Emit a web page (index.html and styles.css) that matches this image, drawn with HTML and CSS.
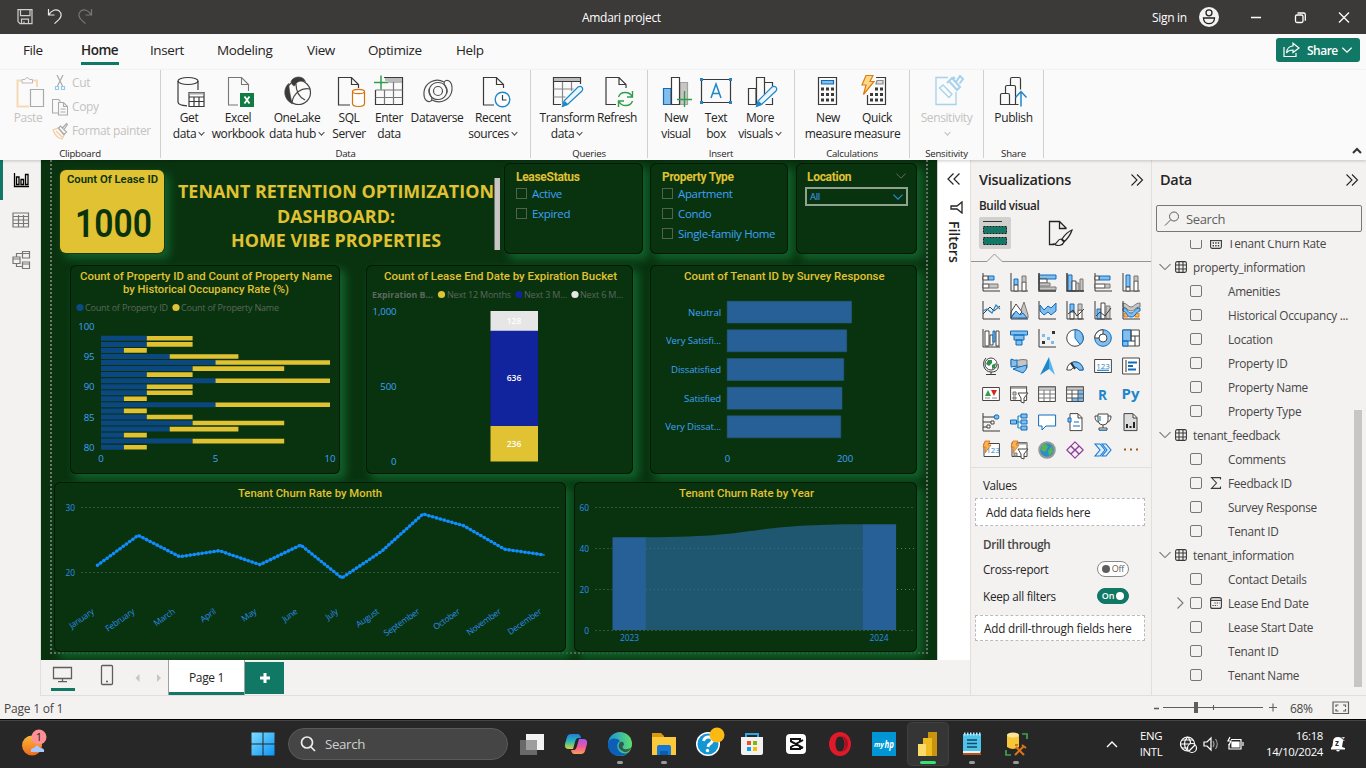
FILE: index.html
```html
<!DOCTYPE html>
<html lang="en">
<head>
<meta charset="utf-8">
<title>Amdari project</title>
<link rel="stylesheet" href="styles.css">
</head>
<body>
<svg class="defs" aria-hidden="true">
  <symbol id="table" viewBox="0 0 12 12"><rect x=".6" y=".6" width="10.8" height="10.8" rx="1.6"/><path d="M.6 4h10.8M.6 8h10.8M4 .6v10.8M8 .6v10.8"/></symbol>
  <symbol id="calc" viewBox="0 0 12 12"><rect x=".6" y=".6" width="10.8" height="10.8" rx="1.6"/><path d="M.6 3.6h10.8"/><path d="M2.6 6h7M2.6 8.8h7" stroke-dasharray="1.4 1.2" stroke-width="1.5"/></symbol>
  <symbol id="cal" viewBox="0 0 12 12"><rect x=".6" y=".6" width="10.8" height="10.8" rx="2"/><path d="M.6 3.4h10.8"/><path d="M4.5 6h5M2.5 8.5h5" stroke-dasharray="1.2 1"/></symbol>
  <symbol id="down" viewBox="0 0 12 12"><path d="M.5 3.2 6 8.6l5.500-5.400"/></symbol>
  <symbol id="right" viewBox="0 0 12 12"><path d="M3.500.5 9 6l-5.500 5.500"/></symbol>
  <symbol id="chevs" viewBox="0 0 14 12"><path d="M1.500.5 7 6l-5.500 5.500M7 .5 12.500 6 7 11.500"/></symbol>
</svg>

<header class="titlebar">
  <div class="quick">
    <svg width="90" height="20" viewBox="10 8 90 20" fill="none" stroke="#e8e8e8" stroke-width="1.2">
      <path d="M18 10.600h14v14H20l-2-2zM20.500 10.600v6h9.500v-6M21.500 24.600v-4.500h7v4.500M24 24.600v-2" stroke="#cfcfcf"/>
      <path d="M48.500 10v6h6M48.800 15.600c3-4.500 7-6 10.500-3.500 3 2.500 2 6-.5 8.500l-4.300 4"/>
      <path d="M91.500 10v6h-6M91.200 15.600c-3-4.500-7-6-10.500-3.500-3 2.500-2 6 .5 8.500l4.300 4" stroke="#777"/>
    </svg>
  </div>
  <div class="doc">Amdari project</div>
  <div class="win">
    <span>Sign in</span>
    <svg width="168" height="24" viewBox="1198 6 168 24" fill="none" stroke="#fff" stroke-width="1.300">
      <circle cx="1209" cy="18" r="10" fill="#f3f2f1" stroke="none"/>
      <circle cx="1209" cy="13.800" r="3" stroke="#222"/><path d="M1203.500 19h11c0 7.500-11 7.500-11 0z" stroke="#222"/>
      <path d="M1251 18.500h10M1339 13.500l10 10m0-10-10 10"/>
      <rect x="1295.500" y="16" width="7.500" height="7.500" rx="1.500"/><path d="M1297.500 14h6q1.800 0 1.800 1.800v6"/>
    </svg>
  </div>
</header>

<nav class="menu">
  <a class="m1">File</a><a class="m2 on">Home</a><a class="m3">Insert</a><a class="m4">Modeling</a><a class="m5">View</a><a class="m6">Optimize</a><a class="m7">Help</a>
  <button class="share"><svg width="18" height="16" viewBox="0 0 18 16" fill="none" stroke="#fff" stroke-width="1.200"><path d="M1 5v9.500h12V11M3.500 11c.5-5 3-7 6.500-7V1.200L16 6l-6 4.600V8c-3 0-5 .8-6.500 3z"/></svg><span>Share</span><svg width="10" height="10" fill="none" stroke="#fff" stroke-width="1.500"><use href="#down"/></svg></button>
</nav>

<section class="ribbon">
  <div class="group clip">
    <div class="items">
      <div class="btn off"><svg class="ic" viewBox="10 75 36 34" fill="none"><path d="M22 80.500h-4.500v26H29M37 87v-6.500h-4" stroke="#f7d9b5" stroke-width="2"/><path d="M22 83v-3.500h3q2-4 4.500 0h3V83z" stroke="#bbb" fill="#fafafa"/><path d="M30.500 89.500h13v17h-13z" stroke="#aaa" fill="#fafafa" stroke-width="1.200"/></svg><span>Paste</span></div>
      <div class="small">
        <div><svg width="16" height="18" viewBox="52 74 16 18" fill="none" stroke="#aaa" stroke-width="1.200"><path d="m57 75 5.500 11M63 75l-5.500 11"/><path d="M55.500 86.500h3v3h-3zM61.500 86.500h3v3h-3z" stroke="#9cc8e8"/></svg>Cut</div>
        <div><svg width="16" height="18" viewBox="52 97 16 18" fill="none" stroke="#aaa" stroke-width="1.100"><path d="M58 112h-5.500V98.500h6l2 2M58.500 101.500h5l4 4v8.500h-9zM63.500 101.500v4h4M60.500 108h5M60.500 111h5"/></svg>Copy</div>
        <div><svg width="16" height="18" viewBox="52 121 16 18" fill="none" stroke="#aaa" stroke-width="1.200"><path d="m53 129 5-2 6 7-2 4c-5-1-7-4-9-9zM56 130l6 6" stroke="#f2c9a0"/><path d="m58.500 127 2-2 6 6-2.500 2.500zM62.500 127l4-4.500 1 1-3.500 5"/></svg>Format painter</div>
      </div>
    </div>
    <div class="cap">Clipboard</div>
  </div>

  <div class="group data">
    <div class="items">
      <div class="btn"><svg class="ic" viewBox="171 75 36 34" fill="none" stroke="#3b3a39" stroke-width="1.200"><ellipse cx="188" cy="81" rx="10" ry="3.500"/><path d="M178 81v21c0 2.500 4 3.500 9 3.800M198 81v9"/><path d="M189 92.500h15v14h-15z" fill="#fff"/><path d="M189.500 93.500h14" stroke="#aaa" stroke-width="2"/><path d="M189 97h15M189 101.500h15M194 97v9.500M199 97v9.500"/></svg><span>Get<br>data<i class="dd"></i></span></div>
      <div class="btn"><svg class="ic" viewBox="220 75 36 34" fill="none" stroke="#797775" stroke-width="1.100"><path d="M238 105H228.500V77.500h13l7 7V91M241.500 77.500v7h7"/><path d="M240 93h14v14h-14z" fill="#107c41" stroke="none"/><path d="m244.500 96.500 5 7m0-7-5 7" stroke="#fff" stroke-width="1.800"/></svg><span>Excel<br>workbook</span></div>
      <div class="btn"><svg class="ic" viewBox="279 75 36 34" fill="none" stroke="#484644" stroke-width="1.200"><circle cx="298.500" cy="92.500" r="12"/><path d="M291 81.500c2-5.500 12-6.500 14.500 0-5-1.500-9 0-10.500 4-2 1-3-1-4-4zM288.500 83.500c-6 6-5 16 4 20.500-2-6-3-13-4-20.500z" fill="#3b3a39" stroke-width=".6"/><path d="M296 84c0 8 3 13 9 16M310 89c-8-2-17 4-18 14"/></svg><span>OneLake<br>data hub<i class="dd"></i></span></div>
      <div class="btn"><svg class="ic" viewBox="331 75 36 34" fill="none" stroke="#3b3a39" stroke-width="1.200"><path d="M350 105H338.500V77.500h13l7 7V88M351.500 77.500v7h7"/><path d="M352.500 91.500v12c0 4 12 4 12 0v-12" fill="#fff" stroke="#d8700b"/><ellipse cx="358.500" cy="91.500" rx="6" ry="2.200" fill="#fff" stroke="#d8700b"/></svg><span>SQL<br>Server</span></div>
      <div class="btn"><svg class="ic" viewBox="371 75 36 34" fill="none" stroke="#3b3a39" stroke-width="1.200"><path d="M384 77.500h18.500v27H375.500V90" /><path d="M385 79.500h17" stroke="#bbb" stroke-width="3"/><path d="M388 82h14M375.500 90h27M375.500 97.500h27M384.500 90v14.500M393.500 82v22.500" stroke="#777"/><path d="M374 82.500h14M381 75.500v14" stroke="#2f9e4b" stroke-width="1.500"/></svg><span>Enter<br>data</span></div>
      <div class="btn"><svg class="ic" viewBox="419 75 36 34" fill="none" stroke="#505050" stroke-width="1.200"><circle cx="438" cy="91" r="4.500"/><path d="M444 82c-9-5-19 1-20 10-.5 8 3 10 6 9.500 3-1 2-4 .5-6-4-6 1-13 7.500-13 7 0 10 6 8.500 11"/><path d="M432 100c9 5 19-1 20-10 .5-8-3-10-6-9.500-3 1-2 4-.5 6 4 6-1 13-7.500 13-7 0-10-6-8.500-11"/></svg><span>Dataverse</span></div>
      <div class="btn"><svg class="ic" viewBox="475 75 36 34" fill="none" stroke="#3b3a39" stroke-width="1.200"><path d="M494 105H483.500V77.500h13l7 7V88M496.500 77.500v7h7"/><circle cx="502.500" cy="99.500" r="7.300" fill="#fff" stroke="#1f86c9" stroke-width="1.400"/><path d="M502.500 95v5h4" /></svg><span>Recent<br>sources<i class="dd"></i></span></div>
    </div>
    <div class="cap">Data</div>
  </div>

  <div class="group queries">
    <div class="items">
      <div class="btn"><svg class="ic" viewBox="549 75 36 34" fill="none" stroke="#3b3a39" stroke-width="1.200"><path d="M561 104.500h-7.500v-27h27V84M553.500 81.500h27"/><path d="M554 79.500h26" stroke="#bbb" stroke-width="3"/><path d="M553.500 89h20M553.500 97h12M562.500 82v22.500M571.500 82v9" stroke="#888"/><path d="m564 101 14-14c3-2 6 1 4 4l-14 13-5.500 2.500z" fill="#eaf5fc" stroke="#1f86c9"/><path d="m563 106 2-4 2.500 2.500z" fill="#1f86c9" stroke="#1f86c9"/></svg><span>Transform<br>data<i class="dd"></i></span></div>
      <div class="btn"><svg class="ic" viewBox="599 75 36 34" fill="none" stroke="#3b3a39" stroke-width="1.200"><path d="M616 104.500h-10v-27h13l7 7V88M619 77.500v7h7"/><path d="M618.500 97c2-6 11-6 13.500-.5M632.500 91v6h-5.500M632.500 101c-2 6-11 6-13.500.5M618.500 107v-6h5.500" stroke="#2f9e4b" stroke-width="1.400"/></svg><span>Refresh</span></div>
    </div>
    <div class="cap">Queries</div>
  </div>

  <div class="group insert">
    <div class="items">
      <div class="btn"><svg class="ic" viewBox="658 75 36 34" fill="none" stroke="#3b3a39" stroke-width="1.200"><path d="M663.500 88.500h7.500v16h-7.500z" fill="#83beec" stroke="#0f6cbd"/><path d="M680 82.500h7.500v22H680z" fill="#c8c6c4" stroke="#a5a3a1"/><path d="M671.500 77.500h8v27h-8z" fill="#fff"/><path d="M677 99.500h15M684.500 91v16" stroke="#2f9e4b" stroke-width="1.400"/></svg><span>New<br>visual</span></div>
      <div class="btn"><svg class="ic" viewBox="698 75 36 34" fill="none" stroke="#3b3a39" stroke-width="1.200"><path d="M701.500 79.500h29v23h-29z"/><path d="M700 78h3v3h-3zM729 78h3v3h-3zM700 101h3v3h-3zM729 101h3v3h-3z" fill="#1f86c9" stroke="none"/><path d="m711 98 5-14 5 14m-1.500-4.500h-7" stroke="#1f86c9" stroke-width="1.500"/></svg><span>Text<br>box</span></div>
      <div class="btn"><svg class="ic" viewBox="742 75 36 34" fill="none" stroke="#3b3a39" stroke-width="1.200"><path d="M748.500 88.500h7.500v16h-7.500zM756.500 104V77.500h8V96M764.500 82.500h8V86M772.500 98v6.500h-7"/><path d="m758 101 14-14c3-2 6 1 4 4l-14 13-5.500 2.500z" fill="#eaf5fc" stroke="#1f86c9"/><path d="m757 106 2-4 2.500 2.500z" fill="#1f86c9" stroke="#1f86c9"/></svg><span>More<br>visuals<i class="dd"></i></span></div>
    </div>
    <div class="cap">Insert</div>
  </div>

  <div class="group calcs">
    <div class="items">
      <div class="btn"><svg class="ic" viewBox="810 75 36 34" fill="none" stroke="#3b3a39" stroke-width="1.200"><path d="M818.500 77.500h18v27h-18z"/><path d="M821.500 80.500h12v3.500h-12z" fill="#83beec" stroke="#0f6cbd"/><path d="M821 89h13M821 94.500h13M821 100h13" stroke-width="3" stroke-dasharray="3 2"/></svg><span>New<br>measure</span></div>
      <div class="btn"><svg class="ic" viewBox="859 75 36 34" fill="none" stroke="#3b3a39" stroke-width="1.200"><path d="M876 77.500h9.500v27h-18V95"/><path d="M877 80.500h6v3.500h-7z" fill="#ddd" stroke="#888"/><path d="M875 89h8M870 94.500h13M870 100h13" stroke-width="3" stroke-dasharray="3 2"/><path d="m866 75.500 7 0-3 6h4l-10.500 13 2.500-9.500h-4z" fill="#fbd98a" stroke="#e07b11"/></svg><span>Quick<br>measure</span></div>
    </div>
    <div class="cap">Calculations</div>
  </div>

  <div class="group sens">
    <div class="items">
      <div class="btn off"><svg class="ic" viewBox="929 75 36 34" fill="none" stroke="#a6d2ec" stroke-width="1.300"><path d="M948 77.500h-12v27h20V92"/><path d="m943 85 9 9-3 3.500-9.500-9.500zM946 88l4.500 5"/><path d="m949 81 3-3 8 9-3 3zM953 77l2 2M956 82l4-6 3 3-3.500 4.500M947 83l2-2" stroke-width="2"/></svg><span>Sensitivity<br><i class="dd"></i></span></div>
    </div>
    <div class="cap">Sensitivity</div>
  </div>

  <div class="group pub">
    <div class="items">
      <div class="btn"><svg class="ic" viewBox="997 75 36 34" fill="none" stroke="#3b3a39" stroke-width="1.200"><path d="M1002.500 104.500V95q0-1.500 1.500-1.500h6q1.500 0 1.500 1.500v9.500zM1007.500 93v-6q0-1.500 1.500-1.500h7q1.500 0 1.500 1.500v17.500h-6M1012.500 85v-6q0-1.500 1.500-1.500h7q1.500 0 1.500 1.500v10.500M1017.500 104.500h3"/><path d="M1023 106.500V92M1017.500 97.500l5.500-6 5.500 6" stroke="#1f86c9" stroke-width="1.500"/></svg><span>Publish</span></div>
    </div>
    <div class="cap">Share</div>
  </div>
  <svg class="fold" width="10" height="8" viewBox="0 0 10 8" fill="none" stroke="#333" stroke-width="2"><path d="m1 6 4-4 4 4"/></svg>
</section>

<main class="body">
  <aside class="rail">
    <div class="r on"><svg width="18" height="18" viewBox="0 0 18 18" fill="none" stroke="#000" stroke-width="1.300"><path d="M2.500 2v13.500H17M4.500 6h2.500v7.500H4.500zM9 8.500h2.500v5H9zM13.500 3.500H16v10h-2.500z"/></svg></div>
    <div class="r"><svg width="18" height="18" viewBox="0 0 18 18" fill="none" stroke="#797775" stroke-width="1.200"><path d="M1 2h15.500v14H1zM1 5.500h15.500M1 9h15.500M1 12.500h15.500M6.500 4v12M11.500 4v12"/></svg></div>
    <div class="r"><svg width="20" height="20" viewBox="0 0 20 20" fill="none" stroke="#797775" stroke-width="1.200"><path d="M2 7h7v6.500H2zM11.500 1.500h7V8h-7zM11.500 12h7v6.500h-7zM2 9h7M11.500 3.500h7M11.500 14h7M5.500 7V3.500h6M5.500 13.500v3h6"/></svg></div>
  </aside>

  <section class="center">
    <div class="canvas">
      <div class="page">
        <div class="row one">
          <div class="card kpi"><svg width="104" height="84" viewBox="60 170 104 84"><text x="67" y="183.300" textLength="91" lengthAdjust="spacingAndGlyphs" class="kt">Count Of Lease ID</text><text x="75" y="237" textLength="77" lengthAdjust="spacingAndGlyphs" class="kv">1000</text></svg></div>
          <svg class="headline" width="328" height="92" viewBox="172 163 328 92"><g class="ht"><text x="178" y="198" textLength="316" lengthAdjust="spacingAndGlyphs">TENANT RETENTION OPTIMIZATION</text><text x="277" y="223" textLength="118" lengthAdjust="spacingAndGlyphs">DASHBOARD:</text><text x="231" y="247" textLength="210" lengthAdjust="spacingAndGlyphs">HOME VIBE PROPERTIES</text></g><path d="M494.500 178h6v72h-6z" fill="#c8c6c4"/></svg>
          <div class="card slicer s1"><h4>LeaseStatus</h4><label><i></i>Active</label><label><i></i>Expired</label></div>
          <div class="card slicer s2"><h4>Property Type</h4><label><i></i>Apartment</label><label><i></i>Condo</label><label><i></i>Single-family Home</label></div>
          <div class="card slicer s3"><h4>Location<svg width="10" height="10" fill="none" stroke="#777"><use href="#down"/></svg></h4><div class="sel">All<svg width="10" height="10" fill="none" stroke="#2b88e6" stroke-width="1.400"><use href="#down"/></svg></div></div>
        </div>

        <div class="row two">
          <div class="card c1"><svg width="270" height="209" viewBox="70 265 270 209">
            <text class="ct" x="80" y="279.500" textLength="252" lengthAdjust="spacingAndGlyphs">Count of Property ID and Count of Property Name</text>
            <text class="ct" x="123" y="292.500" textLength="166" lengthAdjust="spacingAndGlyphs">by Historical Occupancy Rate (%)</text>
            <circle cx="80" cy="307.500" r="3.600" fill="#0b4a86"/><text class="lg" x="85" y="311" textLength="83">Count of Property ID</text>
            <circle cx="176" cy="307.500" r="3.600" fill="#e0c232"/><text class="lg" x="181" y="311" textLength="98">Count of Property Name</text>
            <g class="ax end"><text x="94.500" y="330">100</text><text x="94.500" y="360">95</text><text x="94.500" y="390">90</text><text x="94.500" y="421">85</text><text x="94.500" y="451">80</text></g>
            <g class="ax mid"><text x="101" y="462">0</text><text x="215.500" y="462">5</text><text x="330" y="462">10</text></g>
            <path stroke="#0b4780" stroke-width="5" d="M101 338.300H146.800M101 344.400H146.800M101 350.400H123.900M101 356.500H169.700M101 362.500H215.500M101 368.600H192.600M101 374.600H146.800M101 380.700H215.500M101 386.700H146.800M101 392.800H146.800M101 398.800H123.900M101 404.800H215.500M101 410.900H123.900M101 417H146.800M101 423H192.600M101 429.100H169.700M101 435.100H123.900M101 441.100H192.600M101 447.200H123.900"/>
            <path stroke="#e0c232" stroke-width="4.600" d="M146.800 338.300H192.600M146.800 344.400H192.600M123.900 350.400H146.800M169.700 356.500H238.400M215.500 362.500H330M192.600 368.600H284.200M146.800 374.600H192.600M215.500 380.700H330M146.800 386.700H192.600M146.800 392.800H192.600M123.900 398.800H146.800M215.500 404.800H330M123.900 410.900H146.800M146.800 417H192.600M192.600 423H284.200M169.700 429.100H238.400M123.900 435.100H146.800M192.600 441.100H284.200M123.900 447.200H146.800"/>
          </svg></div>
          <div class="card c2"><svg width="267" height="209" viewBox="366 265 267 209">
            <text class="ct" x="384" y="279.500" textLength="233" lengthAdjust="spacingAndGlyphs">Count of Lease End Date by Expiration Bucket</text>
            <text class="lg bold" x="372" y="298" textLength="61">Expiration B...</text>
            <circle cx="441.500" cy="294.500" r="3.600" fill="#e0c232"/><text class="lg" x="447" y="298" textLength="64">Next 12 Months</text>
            <circle cx="519" cy="294.500" r="3.600" fill="#12239e"/><text class="lg" x="524" y="298" textLength="43">Next 3 M...</text>
            <circle cx="575" cy="294.500" r="3.600" fill="#e6e6e6"/><text class="lg" x="580" y="298" textLength="43">Next 6 M...</text>
            <g class="ax end"><text x="396.500" y="315">1,000</text><text x="396.500" y="390">500</text><text x="396.500" y="465">0</text></g>
            <path fill="#e6e6e6" d="M490.500 311H538v20h-47.500z"/><path fill="#12239e" d="M490.500 330.800H538V426h-47.500z"/><path fill="#e0c232" d="M490.500 426H538v35.500h-47.500z"/>
            <g class="dl"><text x="514" y="324">128</text><text x="514" y="381">636</text><text x="514" y="447">236</text></g>
          </svg></div>
          <div class="card c3"><svg width="267" height="209" viewBox="650 265 267 209">
            <text class="ct" x="684" y="279.500" textLength="200.500" lengthAdjust="spacingAndGlyphs">Count of Tenant ID by Survey Response</text>
            <g class="ax end"><text x="721" y="316">Neutral</text><text x="721" y="344">Very Satisfi...</text><text x="721" y="373">Dissatisfied</text><text x="721" y="402">Satisfied</text><text x="721" y="430">Very Dissat...</text></g>
            <path fill="#275f97" stroke="#2a5a80" stroke-width=".5" d="M727.200 301.200H851.600v21.800H727.200zM727.200 329.800H846.700v22H727.200zM727.200 358.500H843.800v22H727.200zM727.200 387.200H842v22H727.200zM727.200 415.800H840.800v22H727.200z"/>
            <g class="ax mid"><text x="727.500" y="462">0</text><text x="845" y="462">200</text></g>
          </svg></div>
        </div>

        <div class="row three">
          <div class="card c4"><svg width="512" height="170" viewBox="54 482 512 170" fill="none">
            <text class="ct" x="238" y="496.500" textLength="144" lengthAdjust="spacingAndGlyphs">Tenant Churn Rate by Month</text>
            <g class="ax sm end"><text x="75" y="510.500">30</text><text x="75" y="575.500">20</text></g>
            <path d="M81.500 507.500H559M81.500 572.500H559" stroke="#5f7a60" stroke-dasharray="1 3"/>
            <path d="M97.500 565.300 138.200 535.300 179.600 556.700 219.300 550.700 260 564.700 300.700 545 341.800 578 382 551 423 514 463.600 525.700 504.700 549.300 544.700 555" stroke="#118dff" stroke-width="2" stroke-opacity=".75"/><path d="M97.500 565.300 138.200 535.300 179.600 556.700 219.300 550.700 260 564.700 300.700 545 341.800 578 382 551 423 514 463.600 525.700 504.700 549.300 544.700 555" stroke="#118dff" stroke-width="3.600" stroke-linecap="round" stroke-dasharray="0 4"/>
            <g class="mo"><text transform="translate(94.500 613) rotate(-35)">January</text><text transform="translate(135 613) rotate(-35)">February</text><text transform="translate(175.500 613) rotate(-35)">March</text><text transform="translate(216.500 613) rotate(-35)">April</text><text transform="translate(257 613) rotate(-35)">May</text><text transform="translate(298 613) rotate(-35)">June</text><text transform="translate(338.500 613) rotate(-35)">July</text><text transform="translate(379.500 613) rotate(-35)">August</text><text transform="translate(420 613) rotate(-35)">September</text><text transform="translate(460.500 613) rotate(-35)">October</text><text transform="translate(501.500 613) rotate(-35)">November</text><text transform="translate(542 613) rotate(-35)">December</text></g>
          </svg></div>
          <div class="card c5"><svg width="343" height="170" viewBox="574 482 343 170" fill="none">
            <text class="ct" x="679" y="496.500" textLength="135" lengthAdjust="spacingAndGlyphs">Tenant Churn Rate by Year</text>
            <g class="ax sm end"><text x="589" y="510.500">60</text><text x="589" y="551.500">40</text><text x="589" y="592.500">20</text><text x="589" y="633.500">0</text></g>
            <path d="M645 630V537.200C765 537.200 740 524.200 863 524.200V630z" fill="#1f5670"/>
            <path d="M612.500 630V537.200h33.300V630zM862.800 630V524.200h33.300V630z" fill="#275f97"/>
            <path d="M595.500 507.500H914M595.500 548.500H612M595.500 589.500H612M897 548.500H914M897 589.500H914M595.500 630.500H914" stroke="#5f7a60" stroke-dasharray="1 3"/><path d="M646 548.500H863M646 589.500H863" stroke="#3a6d85" stroke-dasharray="1 3"/>
            <g class="ax sm mid"><text x="629.500" y="641">2023</text><text x="879" y="641">2024</text></g>
          </svg></div>
        </div>
      </div>
    </div>
    <aside class="filters"><svg width="14" height="12" viewBox="0 0 14 12" fill="none" stroke="#252423" stroke-width="1.200"><path d="M6.500.5 1 6l5.500 5.500M12.500.5 7 6l5.500 5.500"/></svg><svg width="13" height="13" viewBox="0 0 13 13" fill="none" stroke="#252423" stroke-width="1.300"><path d="M12 1v11L7 8H1V5h6z"/></svg><span>Filters</span></aside>
    <div class="tabs">
      <svg width="127" height="35" viewBox="41 660 127 35" fill="none" stroke="#605e5c" stroke-width="1.300"><path d="M53.500 667.500h18v11h-18zM62.500 679v2.500M58 681.700h9"/><path d="M51 689.500h24" stroke="#117865" stroke-width="3"/><rect x="101.500" y="665.500" width="11" height="19" rx="1"/><path d="M106 681.500h2"/><path d="m139.500 674-4 4 4 4zM157 674l4 4-4 4z" fill="#c8c6c4" stroke="none"/></svg>
      <div class="tab">Page 1</div><div class="add"><svg width="12" height="12"><path d="M6 1v10M1 6h10" stroke="#fff" stroke-width="3"/></svg></div>
    </div>
  </section>

  <aside class="viz">
    <h3>Visualizations<svg width="14" height="14" fill="none" stroke="#252423" stroke-width="1.100"><use href="#chevs"/></svg></h3>
    <h5>Build visual</h5>
    <svg class="modes" width="180" height="50" viewBox="971 214 180 50" fill="none">
      <rect x="979" y="217" width="32" height="32" rx="2" fill="#d2d0ce"/><path d="M983 221.500h19" stroke="#333"/><path d="M983.500 226.500h23v7h-23zM983.500 237.500h23v7h-23z" fill="#117865" stroke="#1a1a1a" stroke-dasharray="2 1"/>
      <path d="M1054 244.500h-4.500v-23h10l7 7M1059.500 221.500v7h7" stroke="#252423" stroke-width="1.300"/><path d="M1072 230c-5 2-8 6-10 9l2.500 2.500c3-3 6-6 7.500-11.500zM1061 239c-4 0-3 5-7 5 4 3 9 1 10-2z" stroke="#252423" stroke-width="1.200"/>
      <path d="M971 261.500h16l7.500-7.500 7.500 7.500h149" stroke="#979593"/>
    </svg>
    <div class="vgrid">
      <svg viewBox="0 0 18 18"><path class="k" d="M1 0v18h17"/><path class="b" d="M6 3h6v4H6z"/><path class="w" d="M1 3h5v4H1zM1 11h6v4H1z"/><path class="g" d="M7 11h9v4H7z"/></svg>
      <svg viewBox="0 0 18 18"><path class="k" d="M1 0v18h17"/><path class="b" d="M4 6h4v6H4z"/><path class="w" d="M4 12h4v6H4zM12 9h4v9h-4z"/><path class="g" d="M12 3h4v6h-4z"/></svg>
      <svg viewBox="0 0 18 18"><path class="b" d="M1 2h17v4H1z"/><path class="w" d="M1 6h8v4H1z"/><path class="g" d="M1 10h11v3H1zM1 14h17v3H1z"/><path class="k" stroke-width="1.500" d="M1 0v18h17"/></svg>
      <svg viewBox="0 0 18 18"><path class="b" d="M2 2h4v16H2z"/><path class="w" d="M6 8h4v10H6z"/><path class="g" d="M10 10h3v8h-3zM14 6h3v12h-3z"/><path class="k" stroke-width="1.500" d="M1 0v18h17"/></svg>
      <svg viewBox="0 0 18 18"><path class="k" d="M1 0v18h17"/><path class="b" d="M5 3h11v4H5z"/><path class="w" d="M1 3h4v4H1zM1 11h10v4H1z"/><path class="g" d="M11 11h5v4h-5z"/></svg>
      <svg viewBox="0 0 18 18"><path class="k" d="M1 0v18h17"/><path class="b" d="M4 2h4v12H4z"/><path class="w" d="M4 14h4v4H4zM12 8h4v10h-4z"/><path class="g" d="M12 3h4v5h-4z"/></svg>

      <svg viewBox="0 0 18 18"><path class="k" d="M1 0v18h17M1 13l7-7 4 4 6-5"/><path class="bl" d="m1 10 4-2 5 4 4-8 4 4"/></svg>
      <svg viewBox="0 0 18 18"><path class="g" d="m14 1 4 13v3H8z"/><path class="w" d="m6 3 6 8-3 3-5-2-3 5V11z"/><path class="b" d="m1 17 5-7 4 4 3-2 4 5z"/><path class="k" d="M1 0v18h17"/></svg>
      <svg viewBox="0 0 18 18"><path class="b" d="m2 4 4 5 4-4 3 2 5-5v8l-5 4-3-3-4 3-4-4z"/><path class="k" d="M1 0v18h17"/></svg>
      <svg viewBox="0 0 18 18"><path class="b" d="M4 3h4v8H4z"/><path class="w" d="M4 11h4v7H4zM12 9h4v9h-4z"/><path class="g" d="M12 3h4v6h-4z"/><path class="k" d="M1 0v18h17M2 13l5-4 4 6 7-7"/></svg>
      <svg viewBox="0 0 18 18"><path class="b" d="M3 8h4v10H3z"/><path class="w" d="M7 2h4v16H7z"/><path class="g" d="M12 5h4v13h-4z"/><path class="k" d="M1 0v18h17M2 15l4-4 5 4 6-8"/></svg>
      <svg viewBox="0 0 18 18"><path class="o" d="M2 12h4v4H2zM13 12h4v4h-4z"/><path class="g" d="M1 2c4 0 5 4 8 4s4-4 9-4v4c-5 0-5 4-9 4S5 6 1 6z"/><path class="b" d="M1 7c5 0 4 5 8 5s3-5 9-5v3c-4 0-4 6-9 6S6 11 1 10z"/><path class="k" d="M1 0v18h17"/></svg>

      <svg viewBox="0 0 18 18"><path class="w" d="M3 2h4v15H3zM8 6h3v10H8z"/><path class="b" d="M11 2h2v11h-2z"/><path class="w" d="M14 2h3v15h-3z"/><path class="k" d="M1 0v18h17"/></svg>
      <svg viewBox="0 0 18 18"><path class="b" d="M.5 2h17v4H.5zM4 6h10v5H4zM6 11h6v5H6z"/></svg>
      <svg viewBox="0 0 18 18"><path class="k" d="M1 0v18h17"/><path fill="#333" d="M4 12h3v3H4zM14 2h3v3h-3z"/><path fill="#7bbcf0" d="M4 5h3v3H4zM9 8h3v3H9zM13 12h3v3h-3z"/></svg>
      <svg viewBox="0 0 18 18"><circle class="w" cx="9" cy="9" r="8.300"/><path class="b" d="M9 .7V9l5 6.500A8.300 8.300 0 0 0 9 .7z"/></svg>
      <svg viewBox="0 0 18 18"><circle class="b" cx="9" cy="9" r="8.300"/><path class="w" d="M9 .7A8.300 8.300 0 0 0 .7 9H5q0-4 4-4z"/><circle class="w" cx="9" cy="9" r="4"/></svg>
      <svg viewBox="0 0 18 18"><path class="w" d="M.7 1h16.600v16H.7z"/><path class="b" d="M.7 1H9v11H.7zM.7 12H6v5H.7z"/><path class="k" d="M9 1v11M9 7h8M13 7v10M9 12h4"/></svg>

      <svg viewBox="0 0 18 18"><circle cx="9" cy="7" r="6" fill="#fff" stroke="#444"/><path fill="#2f8f4a" d="M6 3h4v3L7 9 4 7zM10 8l4-2-1 5-3 1z"/><path class="k" d="M4 1C-1 6 2 15 9 15s8-4 7-8M9 15v2.500M4 17.500h10"/></svg>
      <svg viewBox="0 0 18 18"><path class="g" d="M1 3q4 1 8 0t8 0v8l-5 1-3-3-4 1-4-2z"/><path class="b" d="M1 2q4 2 6 1v6l-6 1zM9 10l8-2q0 5-4 8l-5-2-5-2z"/></svg>
      <svg viewBox="0 0 18 18"><path fill="#1f86c9" d="M11 0 2 18l9-6z"/><path fill="#56b4ee" d="m11 0 6 18-6-6z"/></svg>
      <svg viewBox="0 0 18 18"><path class="w" d="M.8 13a8.200 8.200 0 0 1 16.400 0H13q-4-6-8 0z"/><path class="b" d="M6 5.500A8.200 8.200 0 0 1 17.200 13H13q-1-3-5-3z"/><path stroke="#333" stroke-width="2" d="m5 6 4 6"/></svg>
      <svg viewBox="0 0 18 18"><path class="w" d="M.6 2.500h16.800v13H.6z"/><text x="9" y="11.500" class="n">123</text><path class="bl" d="M3 13.300h12" stroke-width=".8"/></svg>
      <svg viewBox="0 0 18 18"><path class="w" d="M.6 1h16.800v16H.6z"/><path stroke="#333" d="M4 3v12"/><path stroke="#0f6cbd" stroke-width="2" d="M6 5.500h9M6 9h5M6 12.500h8"/></svg>

      <svg viewBox="0 0 18 18"><path class="w" d="M.6 2.500h16.800v13H.6z"/><path fill="#2f9e4b" d="m6 5 3 6H3z"/><path fill="#d22" d="M12 11 9 5h6z"/><path stroke="#888" d="M3 13h5M10 13h5"/></svg>
      <svg viewBox="0 0 18 18"><path class="w" d="M.6 1.500h16v14h-16z"/><path stroke="#999" stroke-width="2.500" d="M1 2.500h15"/><path class="g" d="M3 7h3v3H3zM3 12h3v2H3z"/><path class="w" d="M8 8h10l-4 5v5l-3-1v-4z"/></svg>
      <svg viewBox="0 0 18 18"><path class="w" d="M.6 1.500h16.800v15H.6z"/><path stroke="#999" stroke-width="2" d="M1 2.500h16"/><path stroke="#777" d="M1 5h16M1 9h16M1 13h16M6 5v11M12 5v11"/></svg>
      <svg viewBox="0 0 18 18"><path class="w" d="M.6 1.500h16.800v15H.6z"/><path fill="#7bbcf0" d="M12 5h5v11h-5zM6 13h7v3H6z"/><path stroke="#999" stroke-width="2" d="M1 2.500h16"/><path stroke="#555" d="M1 5h16M1 9h16M1 13h16M6 5v11M12 5v11"/></svg>
      <svg viewBox="0 0 18 18"><text x="8.500" y="15" class="rr" textLength="9" lengthAdjust="spacingAndGlyphs">R</text></svg>
      <svg viewBox="0 0 18 18"><text x="8.500" y="14" class="rr">Py</text></svg>

      <svg viewBox="0 0 18 18"><path class="k" d="M1 0v18h17"/><path stroke="#333" d="M1 4h12M1 9h9M1 14h6"/><path class="b" d="M13 2h3l1 2-1 2h-3l-1-2z"/><path class="w" d="M9 8h3v3H9zM5 12h3v3H5z"/></svg>
      <svg viewBox="0 0 18 18"><path class="bl" d="M5 9h6M8 3v12M8 3h3M8 15h3"/><path class="b" d="M.5 7h6v4h-6zM11 1h6v4h-6zM11 7h6v4h-6zM11 13h6v4h-6z"/></svg>
      <svg viewBox="0 0 18 18"><path fill="#fff" stroke="#0f6cbd" d="M.6 2h17v11H8l-4 4v-4H.6z"/></svg>
      <svg viewBox="0 0 18 18"><path class="w" d="M4 5V.6h8l4 4v13H4V9"/><path class="k" d="M12 1v4h4"/><path class="b" d="M2 5h3v4H2z"/><path stroke="#0f6cbd" d="M8 9h5M7 13h7"/></svg>
      <svg viewBox="0 0 18 18"><path class="w" d="M4 1h10v7q-1 4-5 4T4 8zM4 3H1q0 6 4 6M14 3h3q0 6-4 6M9 12v3M5 17h8v-2H5z"/><path class="bl" d="M6 3v5M5 17.500h8"/></svg>
      <svg viewBox="0 0 18 18"><path fill="#ddd" stroke="#444" d="M2 .6h9l4 4v13H2zM11 1v4h4"/><path stroke="#222" stroke-width="2" d="M5 15v-4M8.500 15v-2M12 15V9"/></svg>

      <svg viewBox="0 0 18 18"><path class="w" d="M2 2.500h15.400v13H2z"/><text x="11" y="12" class="n">123</text><path class="o" d="M3 0h5L6 4h3l-6 8 1-6H1z"/></svg>
      <svg viewBox="0 0 18 18"><path class="w" d="M2 1.500h15v14H2z"/><path stroke="#999" stroke-width="2" d="M6 2.500h11"/><path class="g" d="M4 12h3v3H4z"/><path class="w" d="M8 8h10l-4 5v5l-3-1v-4z"/><path class="o" d="M3 0h5L6 4h3l-6 8 1-6H1z"/></svg>
      <svg viewBox="0 0 18 18"><circle cx="9" cy="9" r="7.800" fill="#2b8fc4" stroke="#999" stroke-width="2"/><path fill="#5ab25a" d="M4 4l4-1 2 3-3 5-4-2zM10 10l4-5 1 6-4 4z"/></svg>
      <svg viewBox="0 0 18 18"><path d="m9 .8 4 4-4 4-4-4zM4.800 5l4 4-4 4-4-4zM13.200 5l4 4-4 4-4-4zM9 9.200l4 4-4 4-4-4z" stroke="#8e3a9d" stroke-width="1.100" stroke-linejoin="round"/></svg>
      <svg viewBox="0 0 18 18"><path d="M1 3h5l5 6-5 6H1l5-6zM8 3h4l5 6-5 6H8l5-6z" fill="#dceefb" stroke="#1479d6" stroke-width="1.100"/></svg>
      <svg viewBox="0 0 18 18"><path fill="#9b5a1c" d="M2 7.500h2v2H2zM8 7.500h2v2H8zM14 7.500h2v2h-2z"/></svg>
    </div>
    <div class="wells">
      <p class="lab">Values</p>
      <div class="drop">Add data fields here</div>
      <p class="lab dt">Drill through</p>
      <div class="tg"><span>Cross-report</span><b class="sw"><i></i>Off</b></div>
      <div class="tg t2"><span>Keep all filters</span><b class="sw on">On<i></i></b></div>
      <div class="drop d2">Add drill-through fields here</div>
    </div>
  </aside>

  <aside class="fields">
    <h3>Data<svg width="14" height="14" fill="none" stroke="#252423" stroke-width="1.100"><use href="#chevs"/></svg></h3>
    <div class="find"><svg width="16" height="16" viewBox="0 0 16 16" fill="none" stroke="#605e5c"><circle cx="10" cy="5.500" r="4.500"/><path d="M6.800 8.700 1 14.500"/></svg>Search</div>
    <div class="list">
      <ul>
        <li class="cut"><i></i><svg class="ti"><use href="#calc"/></svg><span>Tenant Churn Rate</span></li>
        <li class="t"><svg class="ch"><use href="#down"/></svg><svg class="ti"><use href="#table"/></svg>property_information</li>
        <li><i></i><span>Amenities</span></li>
        <li><i></i><span>Historical Occupancy ...</span></li>
        <li><i></i><span>Location</span></li>
        <li><i></i><span>Property ID</span></li>
        <li><i></i><span>Property Name</span></li>
        <li><i></i><span>Property Type</span></li>
        <li class="t"><svg class="ch"><use href="#down"/></svg><svg class="ti"><use href="#table"/></svg>tenant_feedback</li>
        <li><i></i><span>Comments</span></li>
        <li><i></i><svg class="ti" viewBox="0 0 12 12"><path d="M10.500 2.500V.6H1.500L6.500 6l-5 5.400h9V9.500"/></svg><span>Feedback ID</span></li>
        <li><i></i><span>Survey Response</span></li>
        <li><i></i><span>Tenant ID</span></li>
        <li class="t"><svg class="ch"><use href="#down"/></svg><svg class="ti"><use href="#table"/></svg>tenant_information</li>
        <li><i></i><span>Contact Details</span></li>
        <li><svg class="ch ex"><use href="#right"/></svg><i></i><svg class="ti"><use href="#cal"/></svg><span>Lease End Date</span></li>
        <li><i></i><span>Lease Start Date</span></li>
        <li><i></i><span>Tenant ID</span></li>
        <li><i></i><span>Tenant Name</span></li>
      </ul>
      <div class="bar"></div>
    </div>
  </aside>
</main>

<footer class="status"><span>Page 1 of 1</span>
  <svg width="130" height="20" viewBox="1150 698 130 20" fill="none" stroke="#605e5c" stroke-width="1.300"><path d="M1154 708.500h5" stroke-width="1.600"/><path d="M1163 707.500h100M1213.500 705v5M1269 707.500h8M1273 703.500v8" stroke-width="1.100"/><path d="M1196 702v11" stroke-width="4"/></svg>
  <span class="pc">68%</span>
  <svg width="18" height="14" viewBox="0 0 18 14" fill="none" stroke="#605e5c" stroke-width="1.200"><path d="M1 1h15.500v11.500H1z"/><path d="M4 6V4h2.500M11 4h2.500v2M13.500 8v2H11M6.500 10H4V8"/></svg>
</footer>

<footer class="taskbar">
  <div class="wid"><svg width="30" height="32" viewBox="20 726 30 32"><defs><linearGradient id="sun" x2="0" y2="1"><stop stop-color="#f6b93b"/><stop offset="1" stop-color="#f26a1b"/></linearGradient></defs><circle cx="32" cy="743.500" r="10" fill="url(#sun)"/><path d="M31 750q-1-4 3-4 3-5 6 0 5 0 4 4z" fill="#a9c8ff"/><ellipse cx="39" cy="735" rx="7.500" ry="7.500" fill="#ff8f93"/><text x="39" y="739" text-anchor="middle" font-size="11" fill="#222">1</text></svg></div>
  <svg class="start" width="24" height="24" viewBox="0 0 24 24"><defs><linearGradient id="wn" x2="1" y2="1"><stop stop-color="#7fdcff"/><stop offset="1" stop-color="#0a95f4"/></linearGradient></defs><path fill="url(#wn)" d="M.5.5h11v11H.5zM12.500.5h11v11h-11zM.5 12.500h11v11H.5zM12.500 12.500h11v11h-11z"/></svg>
  <div class="srch"><svg width="16" height="16" viewBox="0 0 16 16" fill="none" stroke="#eee" stroke-width="1.700"><circle cx="7" cy="6.500" r="5.500"/><path d="m11 11 4 4"/></svg>Search</div>
  <div class="apps">
    <div><svg viewBox="0 0 24 24"><path fill="#f2f2f2" d="M6 2h18v16H6z"/><path fill="#808080" fill-opacity=".75" d="M0 8h17v15H0z"/></svg></div>
    <div><svg viewBox="0 0 24 24"><defs><linearGradient id="cA" x2="0" y2="1"><stop stop-color="#1f7be0"/><stop offset=".5" stop-color="#2cb9b4"/><stop offset="1" stop-color="#d8d43a"/></linearGradient><linearGradient id="cB" x2="0" y2="1"><stop stop-color="#a05bf0"/><stop offset=".5" stop-color="#f0569c"/><stop offset="1" stop-color="#ff9a55"/></linearGradient></defs><path fill="url(#cA)" d="M7 2h7q2 0 3 4h-3q-2 0-3 4l-2 7H5q-5 0-4-5l2-7q1-3 4-3z"/><path fill="url(#cB)" d="M17 22h-7q-2 0-3-4h3q2 0 3-4l2-7h4q5 0 4 5l-2 7q-1 3-4 3z"/></svg></div>
    <div class="run"><svg viewBox="0 0 24 24"><defs><linearGradient id="ed" x2="1"><stop stop-color="#1a8fe0"/><stop offset="1" stop-color="#5ee06a"/></linearGradient></defs><circle cx="12" cy="12" r="12" fill="url(#ed)"/><path fill="#0d5fb5" d="M0 12C1 6 8 5 12 9c-4 2-4 9 2 12 3 1 6 0 8-2-5 7-22 8-22-7z"/><path fill="#272727" d="M12 10q4-1 4 3-3 2 0 4 4 1 8-2-3 6-8 5-8-4-4-10z" opacity=".65"/></svg></div>
    <div class="run"><svg viewBox="0 0 24 24"><path fill="#d99a12" d="M0 1h9l3 3v6H0z"/><path fill="#fbc93a" d="M0 5h24v18H0z"/><path fill="#1478d4" d="M5 15q0-2 2-2h10q2 0 2 2v8H5z"/><path fill="#0b5cad" d="M8 19h8v4H8z"/></svg></div>
    <div><svg viewBox="0 0 24 24" overflow="visible"><circle cx="12" cy="12" r="12" fill="#fff"/><circle cx="12" cy="12" r="10.500" fill="#1296d4"/><path d="M7.500 9q1-4 5-4t4 4q-1 2-4 4l-.5 2" fill="none" stroke="#fff" stroke-width="2.800"/><circle cx="11.500" cy="18.500" r="1.700" fill="#fff"/><circle cx="21" cy="3" r="7.500" fill="#fdb913"/></svg></div>
    <div><svg viewBox="0 0 24 24"><path d="M6 6V2h12v4" stroke="#2ea8e5" stroke-width="2" fill="none"/><path fill="#f1f1f1" d="M1 5h22v16q0 2-2 2H3q-2 0-2-2z"/><path fill="#f25022" d="M7 9h4v4H7z"/><path fill="#7fba00" d="M13 9h4v4h-4z"/><path fill="#00a4ef" d="M7 15h4v4H7z"/><path fill="#ffb900" d="M13 15h4v4h-4z"/></svg></div>
    <div><svg viewBox="0 0 24 24"><rect x="2" y="2" width="20" height="20" rx="4" fill="#fff"/><path d="M19 16 7 9.500V7h9v2.500L7 15v2h9v-2.500M19 8l-3 1.700" fill="none" stroke="#111" stroke-width="2"/></svg></div>
    <div><svg viewBox="0 0 24 24"><path fill="#e0192b" fill-rule="evenodd" d="M12 0a11 12 0 1 0 0 24a11 12 0 0 0 0-24zM12 4.500c3 0 4.500 3.500 4.500 7.500s-1.500 7.500-4.500 7.500S7.500 16 7.500 12 9 4.500 12 4.500z"/><path fill="#a81020" d="M14 20c4-3 4-13 0-16 7 1 9 13 0 16z"/></svg></div>
    <div><svg viewBox="0 0 24 24"><path fill="#0096d6" d="M0 0h24v24H0z"/><text x="2" y="15" fill="#fff" font-size="7.500" font-weight="700" font-style="italic" textLength="10" lengthAdjust="spacingAndGlyphs">my</text><text x="12.500" y="16" fill="#fff" font-size="10.500" font-weight="700" font-style="italic" textLength="9.500" lengthAdjust="spacingAndGlyphs">hp</text></svg></div>
    <div class="act"><svg viewBox="0 0 24 24"><path fill="#c8930d" d="M12 0h9v24h-9z"/><path fill="#efbc1f" d="M7 6h9v18H7z"/><path fill="#fbdc6a" d="M2 12h8v12H2z"/></svg></div>
    <div class="run"><svg viewBox="0 0 24 24"><path fill="#4fc3e8" d="M3 2h18v18H3z"/><path fill="#b5541c" d="M3 20h18v3H3z"/><path fill="#eee" d="M3 19h17v2H3z"/><path stroke="#0c4b6e" stroke-width="1.600" d="M7 8h10M7 11.500h10M7 15h10"/><path stroke="#bdeafc" stroke-width="3" stroke-dasharray="1.500 1.500" d="M4 2h17"/></svg></div>
    <div class="run"><svg viewBox="0 0 24 24" fill="none"><path d="M18 2h5v5M2 18v5h5" stroke="#3fa34d" stroke-width="1.700"/><path fill="#f7c73a" d="M3 3v12q6 4 12 0V3z"/><ellipse cx="9" cy="3" rx="6" ry="2.500" fill="#fce59a"/><path stroke="#d9731c" stroke-width="2" d="m11 23 9-9m0 9-8-8M11 13h3M18 13l4 3"/></svg></div>
  </div>
  <div class="tray">
    <svg class="up" width="12" height="8" viewBox="0 0 12 8" fill="none" stroke="#fff" stroke-width="1.400"><path d="m1 7 5-5 5 5"/></svg>
    <div class="lang">ENG<br>INTL</div>
    <svg width="66" height="20" viewBox="1180 734 66 20" fill="none" stroke="#fff" stroke-width="1.200"><circle cx="1187.500" cy="744" r="7"/><path d="M1180.500 744h14M1182 740h11M1182 748h5M1187.500 737c-4 4-4 10 0 14M1187.500 737c3 2 3 5 3 7"/><circle cx="1192" cy="748" r="4.500" fill="#272727"/><path d="m1189 751 6-6"/><path d="M1204 742h3l4-4v12l-4-4h-3z"/><path d="M1213 741q2 3 0 6M1215.500 739q3.500 5 0 10" stroke="#999"/><path d="M1231 739.500h10v9.500h-12v-5M1243 742v4"/><path d="M1232 742h7v5h-7z" fill="#fff"/><path d="m1230 737-2 4h3l-2 4" /></svg>
    <div class="lang clock">16:18<br>14/10/2024</div>
    <svg width="16" height="18" viewBox="0 0 16 18"><path fill="#fff" d="M1 13q2-2 2-6 0-5 5-5 4 0 5 4l-1 6 3 1v1.500H1zM6 15h4q-2 3-4 0z"/><text x="5" y="11" font-size="8" font-weight="700" fill="#272727">z</text><text x="11" y="6" font-size="8" fill="#fff">z</text></svg>
  </div>
</footer>
</body>
</html>
```
FILE: styles.css
```css
* { box-sizing: border-box; }
body { margin: 0; width: 1366px; height: 768px; overflow: hidden; display: flex; flex-direction: column; font-family: "Open Sans", "Noto Sans", sans-serif; font-size: 12px; letter-spacing: -.35px; color: #252423; background: #f3f2f1; }
svg { display: block; flex: none; }
svg text { letter-spacing: 0; }
.defs { position: absolute; width: 0; height: 0; }
h3, h4, h5, p, ul { margin: 0; padding: 0; font-weight: 600; }

.titlebar { height: 34px; flex: none; background: #3b3a39; color: #fff; display: grid; grid-template-columns: 582px 1fr 214px; align-items: center; letter-spacing: -.3px; }
.quick { padding-left: 10px; }
.win { display: flex; align-items: center; }
.win span { width: 46px; }

.menu { height: 36px; flex: none; background: #fafafa; display: flex; align-items: flex-start; font-size: 13.500px; letter-spacing: -.4px; padding-left: 23px; }
.menu a { padding-top: 7px; height: 31px; line-height: 19px; white-space: nowrap; }
.menu .on { border-bottom: 3px solid #117865; font-weight: 600; letter-spacing: -.5px; }
.m1 { width: 58px; } .m2 { width: 38px; margin-right: 31px; } .m3 { width: 67px; } .m4 { width: 90px; } .m5 { width: 61px; } .m6 { width: 88px; } .m7 { width: 30px; }
.share { margin: 4px 6px 0 auto; width: 84px; height: 24px; border: 0; border-radius: 3px; background: #117865; color: #fff; font: 600 12px "Open Sans", sans-serif; letter-spacing: -.5px; display: flex; align-items: center; padding: 0 7px; gap: 6px; }
.share svg:last-child { margin-left: -1px; }
.share span { width: 30px; }

.ribbon { height: 90px; flex: none; background: #fafafa; display: flex; box-shadow: 0 1px 3px #0003; position: relative; z-index: 2; }
.group { height: 88px; border-right: 1px solid #d2d0ce; display: flex; flex-direction: column; }
.items { display: flex; height: 78px; padding-top: 5px; flex: none; }
.cap { font-size: 9.600px; line-height: 12px; text-align: center; letter-spacing: -.2px; }
.btn { display: flex; flex-direction: column; align-items: center; line-height: 16px; text-align: center; white-space: nowrap; letter-spacing: -.4px; }
.btn span { margin-top: 1px; }
.ic { width: 36px; height: 34px; }
.off, .small { color: #c4c2c0; }
.dd { display: inline-block; width: 5px; height: 5px; border: solid #444; border-width: 0 1.500px 1.500px 0; transform: rotate(45deg) scale(.9); margin: 0 1px 3px 3px; }
.off .dd { border-color: #bbb; }
.clip { width: 161px; } .clip .items { padding-left: 10px; } .clip .btn { width: 36px; }
.small { padding-left: 6px; margin-top: -1px; }
.small > div { height: 24px; line-height: 18px; display: flex; gap: 4px; white-space: nowrap; }
.data { width: 370px; } .data .items { padding-left: 6px; display: grid; grid-template-columns: 44px 54px 64px 40px 40px 56px 56px; justify-items: center; }
.queries { width: 117px; } .queries .items { padding-left: 6px; display: grid; grid-template-columns: 60px 40px; justify-items: center; }
.insert { width: 147px; } .insert .items { padding-left: 8px; display: grid; grid-template-columns: 40px 40px 48px; justify-items: center; }
.calcs { width: 115px; } .calcs .items { padding-left: 8px; display: grid; grid-template-columns: 50px 48px; justify-items: center; }
.sens { width: 74px; } .pub { width: 60px; } .sens .items, .pub .items { justify-content: center; }
.fold { margin: 77px 4px 0 auto; }

.body { flex: none; height: 536px; display: flex; }
.rail { width: 41px; border-right: 1px solid #e1dfdd; }
.r { height: 40px; display: flex; align-items: center; justify-content: center; padding-left: 1px; }
.r.on { border-left: 3px solid #117865; padding-right: 2px; }
.center { width: 930px; display: grid; grid-template-columns: 896px 33px; grid-template-rows: 500px 36px; border-right: 1px solid #e1dfdd; }
.canvas { background: #09330f; padding-left: 9px; overflow: hidden; }
.page { width: 878px; height: 494px; padding: 3px 0 0 4px;
  background:
    repeating-linear-gradient(#747570 0 2px, transparent 2px 4px) 0 0 / 2px 100% no-repeat,
    repeating-linear-gradient(#747570 0 2px, transparent 2px 4px) 100% 0 / 2px 100% no-repeat,
    repeating-linear-gradient(90deg, #747570 0 2px, transparent 2px 4px) 0 100% / 100% 2px no-repeat; }
.row { display: flex; }
.card { background: #09330f; border-radius: 6px; box-shadow: inset 0 0 0 1px #031a07, 5px 5px 8px 1px #125f2b; flex: none; }
.one { height: 91px; margin-bottom: 11px; padding-left: 6px; }
.kpi { background: #e0c232; width: 104px; height: 83px; margin-top: 7px; margin-right: 8px; box-shadow: 0 0 0 1px #1d3a0e, 5px 5px 8px 1px #125f2b; }
.kt { font: 600 11.800px Roboto, sans-serif; fill: #09330f; }
.kv { font: 600 38px Roboto, sans-serif; fill: #09330f; }
.headline { margin-right: 4px; }
.ht { font: 700 18.500px "Open Sans", sans-serif; fill: #e0c232; }
.slicer { padding: 8px 11px 0 12px; color: #3fa0fa; }
.slicer h4 { font: 700 12px/12px Roboto, sans-serif; letter-spacing: -.3px; color: #e0c232; margin-bottom: 1px; display: flex; justify-content: space-between; white-space: nowrap; }
.slicer label { display: flex; height: 19.700px; line-height: 19px; gap: 5px; white-space: nowrap; align-items: center; font-size: 11.500px; }
.slicer i { width: 11px; height: 11px; border: 1px solid #4f6350; flex: none; }
.s1 { width: 139px; margin-right: 7px; } .s2 { width: 138px; margin-right: 8px; } .s3 { width: 121px; padding: 8px 9px 0; }
.s3 h4 { padding: 0 2px; margin-bottom: 4px; }
.sel { border: 2px solid #8fa18f; height: 19px; line-height: 17px; font-size: 9.500px; padding: 0 3px; display: flex; justify-content: space-between; align-items: center; }
.two { padding-left: 16px; margin-bottom: 8px; }
.c1 { width: 270px; margin-right: 26px; } .c2 { width: 267px; margin-right: 17px; } .c3 { width: 267px; }
.c4 { width: 512px; margin-right: 8px; } .c5 { width: 343px; }
.ct { font: 500 11.800px Roboto, sans-serif; fill: #e0c232; }
.lg { font-size: 9px; fill: #5c675e; } .bold { font-weight: 700; font-size: 8.800px; }
.ax { font-size: 9.600px; fill: #3fa0fa; } .sm { font-size: 8.400px; fill: #2e8cec; }
.end { text-anchor: end; } .mid { text-anchor: middle; }
.ax text { letter-spacing: -.1px; }
.dl { font-size: 8.500px; font-weight: 600; fill: #fff; text-anchor: middle; }
.mo { font-size: 8.500px; fill: #2e8cec; text-anchor: end; }
.mo text { letter-spacing: -.3px; }

.filters { background: #fff; display: flex; flex-direction: column; align-items: center; padding-top: 13px; border-left: 1px solid #d2d0ce; }
.filters svg + svg { margin: 16px 0 0 4px; }
.filters span { writing-mode: vertical-rl; font-weight: 600; font-size: 14px; line-height: 20px; letter-spacing: 0; margin-top: 7px; }
.tabs { grid-column: 1 / 3; display: flex; border-bottom: 1px solid #e1dfdd; }
.tab { width: 77px; background: #fff; border: solid #a19f9d; border-width: 0 1px; box-shadow: inset 0 -3px #117865; line-height: 35px; text-align: center; }
.add { width: 39px; height: 32px; margin-top: 2px; background: #117865; display: flex; align-items: center; justify-content: center; }

.viz { width: 181px; border-right: 1px solid #e1dfdd; border-bottom: 1px solid #e1dfdd; display: flex; flex-direction: column; }
h3 { font-size: 14.500px; letter-spacing: -.3px; line-height: 20px; display: flex; justify-content: space-between; align-items: center; padding: 0 7px 0 8px; margin-top: 10px; }
h5 { font-size: 11.700px; letter-spacing: -.35px; line-height: 16px; padding-left: 8px; margin: 7px 0 1px; }
.vgrid { display: grid; grid-template-columns: repeat(6, 28px); grid-auto-rows: 28px; padding: 4px 0 0 6px; place-items: center; height: 204px; flex: none; border-bottom: 1px solid #e1dfdd; align-content: start; }
.vgrid svg { width: 18px; height: 18px; overflow: visible; fill: none; }
.k { fill: none; stroke: #3b3a39; } .b { fill: #83beec; stroke: #0f6cbd; } .w { fill: #fff; stroke: #484644; } .g { fill: #c8c6c4; stroke: #797775; } .o { fill: #fbb454; stroke: #d8700b; stroke-width: .8; } .bl { fill: none; stroke: #1f86c9; stroke-width: 1.200; }
.n { font-size: 8px; fill: #1f86c9; text-anchor: middle; }
.rr { font-size: 15px; font-weight: 700; fill: #1f86c9; text-anchor: middle; }
.wells { padding: 8px 6px 0 4px; font-size: 11.700px; }
.lab { padding-left: 8px; line-height: 18px; font-weight: 400; }
.dt { font-weight: 600; color: #484644; margin: 9px 0 6px; }
.drop { background: #fff; border: 1px dashed #bbb; height: 28px; line-height: 26px; padding-left: 10px; margin-top: 4px; white-space: nowrap; letter-spacing: -.25px; }
.d2 { height: 26px; line-height: 25px; padding-left: 8px; margin-top: 9px; letter-spacing: -.2px; }
.tg { display: flex; justify-content: space-between; padding: 0 16px 0 8px; line-height: 20px; align-items: center; height: 20px; letter-spacing: -.25px; }
.t2 { margin-top: 7px; }
.sw { width: 32px; height: 16px; border: 1px solid #8a8886; border-radius: 8px; background: #fff; font-size: 9px; font-weight: 400; color: #605e5c; display: flex; align-items: center; justify-content: center; gap: 2px; line-height: 14px; }
.sw i { width: 8px; height: 8px; border-radius: 50%; background: #605e5c; }
.sw.on { background: #117865; border-color: #117865; color: #fff; font-weight: 600; } .sw.on i { background: #fff; }

.fields { width: 214px; display: flex; flex-direction: column; border-bottom: 1px solid #e1dfdd; }
.find { margin: 15px 4px 0; height: 27px; flex: none; border: 1px solid #797775; border-radius: 2px; display: flex; align-items: center; gap: 6px; padding-left: 7px; font-size: 13px; color: #605e5c; }
.list { margin-top: 8px; flex: 1; display: flex; overflow: hidden; justify-content: space-between; }
ul { list-style: none; width: 202px; margin-top: -9px; font-weight: 400; color: #484644; clip-path: inset(9px 0 0 0); }
li { height: 24px; line-height: 24px; display: flex; align-items: center; padding-left: 38px; white-space: nowrap; font-size: 11.800px; letter-spacing: -.3px; }
li i { width: 12px; height: 12px; border: 1px solid #797775; border-radius: 2px; margin: 0 8px 1px 0; }
li span { margin-left: auto; width: 126px; }
li.t { padding-left: 7px; }
li svg { width: 12px; height: 12px; fill: none; stroke: #3b3a39; stroke-width: 1.100; }
li .ch { stroke: #797775; margin-right: 4px; }
li.t .ti { margin-right: 6px; }
li .ex { margin-left: -16px; }
.bar { width: 8px; height: 277px; background: #c8c6c4; margin: 170px 4px 0 0; }

.status { height: 24px; flex: none; display: flex; align-items: center; padding: 1px 16px 0 4px; color: #484644; border-bottom: 1px solid #000; font-size: 12px; letter-spacing: -.2px; }
.status span:first-child { width: 1146px; }
.pc { width: 52px; padding-left: 10px; letter-spacing: -.4px; }

.taskbar { height: 48px; flex: none; background: #272727; border-top: 1px solid #454545; display: flex; align-items: center; color: #fff; padding-bottom: 2px; }
.wid { width: 251px; padding-left: 20px; }
.srch { margin: 0 2px 0 13px; width: 220px; height: 32px; border-radius: 16px; border: 1px solid #5a5a5a; background: #454545; display: flex; align-items: center; gap: 9px; padding-left: 11px; color: #d0d0d0; font-size: 13.300px; }
.apps { display: flex; }
.apps > div { width: 44px; height: 42px; display: flex; justify-content: center; align-items: center; position: relative; }
.apps svg { width: 24px; height: 24px; }
.run::after, .act::after { content: ""; position: absolute; bottom: 1px; width: 6px; height: 3px; border-radius: 2px; background: #9a9a9a; }
.apps .act { width: 40px; margin: 0 2px; background: #353535; border-radius: 4px; box-shadow: 0 0 0 1px #404040; }
.act::after { width: 16px; background: #34e36b; }
.tray { display: flex; align-items: center; margin-left: auto; padding-right: 20px; font-size: 11.400px; }
.lang { line-height: 16px; text-align: center; width: 26px; margin: 0 16px 0 20px; }
.clock { width: 64px; text-align: right; margin: 0 7px 0 13px; white-space: nowrap; }
```
